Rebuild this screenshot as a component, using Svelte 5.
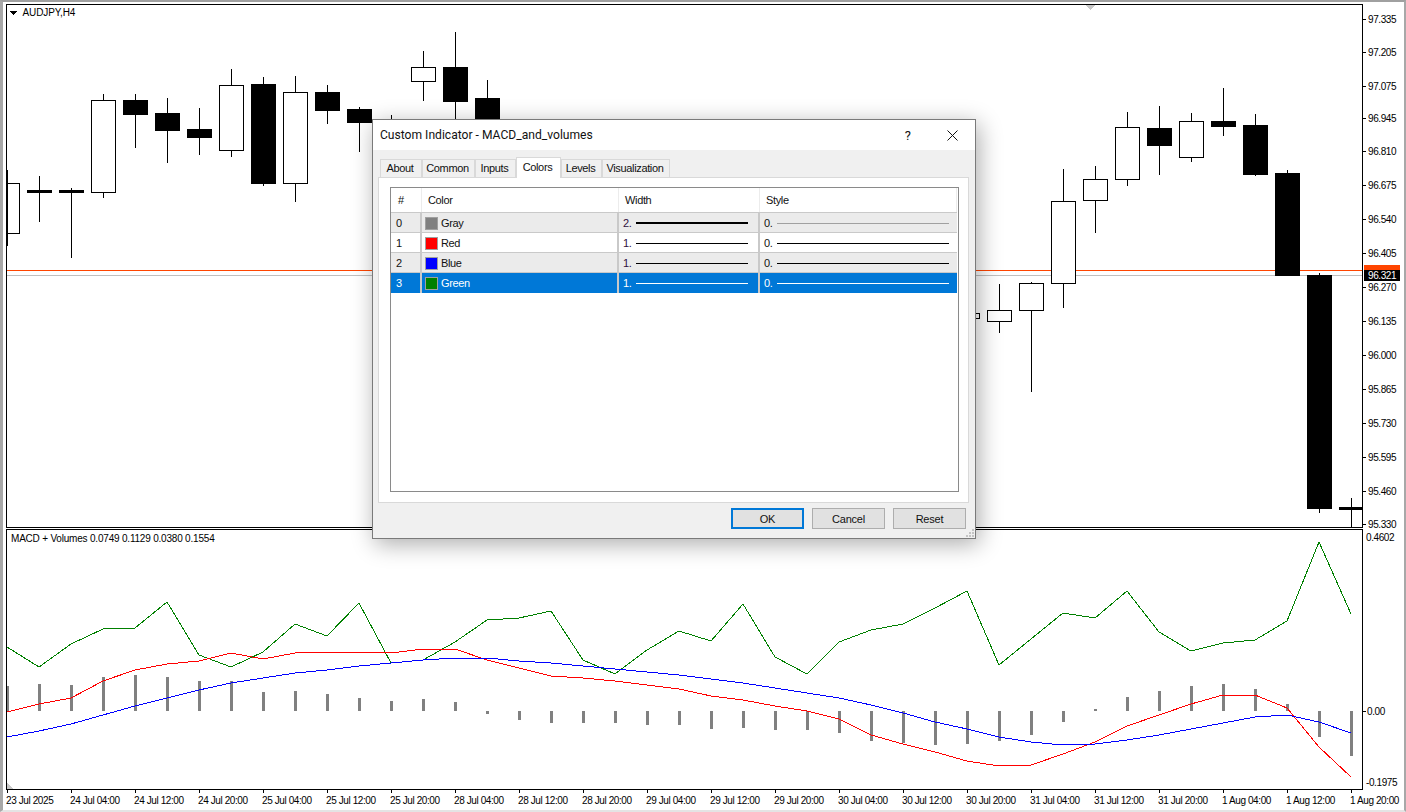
<script lang="ts">
  // chart data, in page pixels: one candle every 32px starting at x=7
  type Candle = { x: number; hi: number; lo: number; top: number; bot: number; down: boolean };
  const c = (x: number, hi: number, lo: number, top: number, bot: number, down = false): Candle => ({ x, hi, lo, top, bot, down });

  const candles: Candle[] = [
    c(7, 170, 246, 183, 233),
    c(39, 176, 222, 190, 192, true),
    c(71, 188, 258, 190, 192, true),
    c(103, 94, 198, 100, 192),
    c(135, 94, 148, 100, 114, true),
    c(167, 98, 163, 113, 130, true),
    c(199, 108, 155, 129, 137, true),
    c(231, 69, 157, 85, 150),
    c(263, 77, 186, 84, 183, true),
    c(295, 76, 202, 92, 183),
    c(327, 85, 124, 92, 110, true),
    c(359, 107, 152, 109, 122, true),
    c(391, 115, 150, 125, 140),
    c(423, 51, 101, 67, 81),
    c(455, 32, 140, 67, 101, true),
    c(487, 80, 140, 98, 130, true),
    c(967, 300, 330, 313, 318),
    c(999, 284, 333, 310, 321),
    c(1031, 282, 392, 283, 310),
    c(1063, 169, 308, 201, 283),
    c(1095, 166, 233, 179, 200),
    c(1127, 112, 186, 127, 179),
    c(1159, 106, 175, 128, 145, true),
    c(1191, 113, 162, 121, 157),
    c(1223, 88, 136, 121, 126, true),
    c(1255, 114, 176, 125, 174, true),
    c(1287, 170, 275, 173, 275, true),
    c(1319, 273, 513, 275, 508, true),
    c(1351, 498, 527, 507, 509, true)
  ];

  const prices: [string, number][] = [
    ['97.335', 19], ['97.205', 52], ['97.075', 86], ['96.945', 118], ['96.810', 151], ['96.675', 185],
    ['96.540', 219], ['96.405', 253], ['96.270', 287], ['96.135', 321], ['96.000', 355], ['95.865', 389],
    ['95.730', 423], ['95.595', 457], ['95.460', 491], ['95.330', 524]
  ];

  const times = ['23 Jul 2025', '24 Jul 04:00', '24 Jul 12:00', '24 Jul 20:00', '25 Jul 04:00', '25 Jul 12:00', '25 Jul 20:00',
    '28 Jul 04:00', '28 Jul 12:00', '28 Jul 20:00', '29 Jul 04:00', '29 Jul 12:00', '29 Jul 20:00', '30 Jul 04:00',
    '30 Jul 12:00', '30 Jul 20:00', '31 Jul 04:00', '31 Jul 12:00', '31 Jul 20:00', '1 Aug 04:00', '1 Aug 12:00', '1 Aug 20:00'];

  const zero = 711;
  const bars = [686, 684, 685, 677, 675, 677, 681, 681, 692, 691, 694, 698, 701, 699, 702, 714, 720, 723, 723, 723, 725, 725,
    729, 728, 730, 730, 733, 741, 743, 745, 744, 741, 735, 722, 709, 697, 691, 686, 684, 689, 704, 737, 756];
  const green = [647, 667, 644, 629, 628, 602, 655, 667, 652, 624, 636, 603, 663, 660, 642, 620, 618, 611, 660, 674, 650, 631,
    641, 604, 657, 674, 642, 630, 624, 608, 591, 665, 639, 613, 618, 591, 632, 651, 643, 640, 621, 542, 614];
  const red = [712, 704, 698, 681, 670, 664, 661, 653, 659, 653, 652, 652, 653, 649, 649, 660, 668, 676, 678, 681, 685, 689,
    696, 700, 706, 711, 719, 735, 744, 752, 761, 766, 765, 754, 742, 726, 715, 704, 695, 695, 708, 747, 777];
  const blue = [737, 731, 724, 715, 706, 698, 690, 683, 678, 673, 670, 666, 663, 660, 658, 658, 661, 663, 666, 669, 672, 675,
    679, 683, 688, 693, 698, 705, 713, 722, 729, 737, 742, 745, 744, 740, 735, 729, 723, 717, 715, 722, 733];

  const pts = (ys: number[]) => ys.map((y, i) => `${7 + i * 32},${y}`).join(' ');

  const tabs = [
    { name: 'About', w: 42 }, { name: 'Common', w: 53 }, { name: 'Inputs', w: 41 },
    { name: 'Colors', w: 45, active: true }, { name: 'Levels', w: 41 }, { name: 'Visualization', w: 68 }
  ];
  const rows = [
    { n: 0, name: 'Gray', color: '#808080', width: 2 },
    { n: 1, name: 'Red', color: '#ff0000', width: 1 },
    { n: 2, name: 'Blue', color: '#0000ff', width: 1 },
    { n: 3, name: 'Green', color: '#008000', width: 1, selected: true }
  ];
</script>

<div class="terminal">
  <div class="pane">
    <svg class="chart" width="1400" height="524" viewBox="0 4 1400 524">
      <g shape-rendering="crispEdges">
        <line class="ask" x1="6" x2="1362" y1="270.5" y2="270.5" />
        <line class="bid" x1="6" x2="1362" y1="275.5" y2="275.5" />
        {#each candles as k}
          {@const x0 = Math.max(k.x - 12, 7)}
          {@const x1 = Math.min(k.x + 12, 1361)}
          <line class="wick" x1={k.x + 0.5} x2={k.x + 0.5} y1={k.hi} y2={k.lo} />
          <rect class={k.down ? 'body down' : 'body up'}
            x={x0 + 0.5} y={k.top + 0.5} width={x1 - x0} height={k.bot - k.top} />
        {/each}
        <polygon class="mark" points="1085,5 1095,5 1090,10" />
        <polygon class="menu" points="10,11 17,11 13.5,15" />
        <rect class="frame" x="6.5" y="4.5" width="1356" height="523" />

        {#each prices as [p, y]}
          <line class="tick" x1="1363" x2="1366" y1={y + 0.5} y2={y + 0.5} />
        {/each}
        <rect x="1364" y="265" width="36" height="11" fill="#ff4500" />
        <rect x="1364" y="270" width="36" height="11" fill="#000" />
      </g>
      <text class="lbl sym" x="22.5" y="16">AUDJPY,H4</text>
      {#each prices as [p, y]}
        <text class="lbl" x="1368" y={y + 4}>{p}</text>
      {/each}
      <text class="lbl inv" x="1368" y="279">96.321</text>
    </svg>
  </div>

  <div class="pane sub">
    <svg class="chart" width="1400" height="280" viewBox="0 529 1400 280">
      <g shape-rendering="crispEdges">
        {#each bars as top, i}
          <rect x={6 + i * 32} y={Math.min(top, zero)} width="3" height={Math.abs(zero - top)} fill="#808080" />
        {/each}
        <polyline class="ln" stroke="#008000" points={pts(green)} />
        <polyline class="ln" stroke="#ff0000" points={pts(red)} />
        <polyline class="ln" stroke="#0000ff" points={pts(blue)} />
        <polygon class="mark" points="7,783 7,789 13,789" />
        <rect class="frame" x="6.5" y="529.5" width="1356" height="260" />
        <line class="tick" x1="1363" x2="1366" y1="711.5" y2="711.5" />
        {#each times as t, i}
          <line class="tick" x1={7.5 + i * 64} x2={7.5 + i * 64} y1="790" y2="793" />
        {/each}
      </g>
      <text class="lbl legend" x="11" y="542">MACD + Volumes 0.0749 0.1129 0.0380 0.1554</text>
      <text class="lbl" x="1366" y="541">0.4602</text>
      <text class="lbl" x="1367" y="715">0.00</text>
      <text class="lbl" x="1366" y="786">-0.1975</text>
      {#each times as t, i}
        <text class="lbl" x={6 + i * 64} y="804">{t}</text>
      {/each}
    </svg>
  </div>

  <div class="dialog">
    <div class="titlebar">
      <span class="title">Custom Indicator - MACD_and_volumes</span>
      <span class="help">?</span>
      <svg class="close" width="11" height="11" viewBox="0 0 11 11">
        <path d="M0.5 0.5 L10.5 10.5 M10.5 0.5 L0.5 10.5" stroke="#111" fill="none" />
      </svg>
    </div>
    <div class="content">
      <div class="tabs">
        {#each tabs as t}
          <div class="tab" class:active={t.active} style="width: {t.w}px">{t.name}</div>
        {/each}
      </div>
      <div class="panel">
        <div class="list">
          <div class="row head">
            <div class="hash">#</div><div>Color</div><div>Width</div><div>Style</div>
          </div>
          {#each rows as r}
            <div class="row item" class:odd={r.n % 2 === 0} class:selected={r.selected}>
              <div class="num">{r.n}</div>
              <div class="name"><i class="swatch" style="background: {r.color}"></i>{r.name}</div>
              <div class="val"><span class="v w">{r.width}.</span><b class="line" style="height: {r.width === 2 ? 2 : 1}px"></b></div>
              <div class="val"><span class="v">0.</span><b class="line" class:faint={r.n === 0}></b></div>
            </div>
          {/each}
        </div>
      </div>
      <div class="buttons">
        <button class="default">OK</button>
        <button>Cancel</button>
        <button>Reset</button>
      </div>
      <svg class="grip" width="10" height="9" viewBox="0 0 10 9" shape-rendering="crispEdges">
        <path d="M7 0h2v2H7zM4 3h2v2H4zM7 3h2v2H7zM1 6h2v2H1zM4 6h2v2H4zM7 6h2v2H7z" fill="#c4c4c4" />
      </svg>
    </div>
  </div>
</div>

<style>
  :global(body) { margin: 0; background: #fff; }
  .terminal {
    position: relative; width: 1406px; height: 812px; overflow: hidden; box-sizing: border-box;
    padding-top: 2px; background: #fff;
    border-top: 2px solid #a0a0a0; border-left: 3px solid #a8a8a8;
    border-right: 2px solid #a8a8a8; border-bottom: 2px solid #e4e4e4;
  }
  .pane { margin-left: -3px; height: 525px; }
  .pane.sub { height: 280px; }
  .chart { display: block; overflow: visible; }

  .ask { stroke: #ff4500; }
  .bid { stroke: #c0c0c0; }
  .wick { stroke: #000; }
  .body { stroke: #000; }
  .up { fill: #fff; }
  .down { fill: #000; }
  .frame { fill: none; stroke: #000; }
  .tick { stroke: #000; }
  .mark { fill: #c8c8c8; }
  .menu { fill: #000; }
  .ln { fill: none; stroke-width: 1; }
  .lbl { font: 10px "Liberation Sans", Arial, sans-serif; letter-spacing: -.4px; fill: #000; }
  .legend { letter-spacing: -.2px; }
  .sym { letter-spacing: -.1px; }
  .inv { fill: #fff; }

  .dialog {
    position: absolute; left: 369px; top: 117px; width: 602px; height: 418px;
    border: 1px solid #7a7a7a; background: #f0f0f0;
    box-shadow: 3px 5px 22px rgba(0, 0, 0, .33);
    display: flex; flex-direction: column;
    font: 11px "Liberation Sans", Arial, sans-serif; letter-spacing: -.35px; color: #111;
  }
  .titlebar {
    height: 30px; background: #fff; display: flex; align-items: center; padding-left: 7px; flex: none;
    letter-spacing: 0;
  }
  .title { font: 12.1px Roboto, "Noto Sans", sans-serif; flex: 1; }
  .help { font: 13px Roboto, sans-serif; margin-right: 36px; }
  .close { margin-right: 17px; }
  .content { flex: 1; padding: 7px 6px 0 5px; position: relative; display: flex; flex-direction: column; }
  .tabs { display: flex; padding-left: 2px; height: 20px; position: relative; z-index: 1; align-items: flex-end; }
  .tab {
    height: 18px; box-sizing: border-box; border: 1px solid #d9d9d9; border-bottom: 0; padding-right: 2px;
    background: #f0f0f0; text-align: center; line-height: 17px;
  }
  .tab.active { height: 21px; background: #fff; line-height: 19px; margin-bottom: -1px; }
  .panel {
    height: 326px; box-sizing: border-box; border: 1px solid #d9d9d9; background: #fff;
    padding: 9px 9px 10px 11px;
  }
  .list { height: 100%; box-sizing: border-box; border: 1px solid #8a8a8a; padding-right: 1px; }
  .row { display: grid; grid-template-columns: 31px 197px 141px 1fr; }
  .head { height: 25px; box-sizing: border-box; line-height: 24px; border-bottom: 1px solid #c9c9c9; }
  .head div { padding-left: 6px; border-right: 1px solid #ececec; }
  .head .hash { padding-left: 7px; }
  .item { height: 20px; box-shadow: inset 0 -1px #c9c9c9; }
  .item > div { border-right: 2px solid #c9c9c9; padding-left: 4px; display: flex; align-items: center; }
  .item > div:last-child { border-right: 0; }
  .item > .num { padding-left: 5px; }
  .item > .name { padding-left: 3px; }
  .odd { background: #ebebeb; }
  .item:not(.odd) { background: #fff; }
  .item.selected { background: #0078d7; color: #fff; box-shadow: none; }
  .swatch { width: 11px; height: 11px; border: 1px solid #a0a0a0; margin-right: 3px; display: block; }
  .v { width: 13px; flex: none; }
  .w { color: #301040; }
  .selected .w { color: #fff; }
  .line { flex: 1; height: 1px; margin-right: 8px; background: #000; display: block; }
  .val:nth-child(3) .line { margin-right: 10px; }
  .line.faint { background: #a0a0a0; }
  .selected .line { background: #fff; }
  .buttons { display: flex; justify-content: flex-end; gap: 8px; padding: 5px 3px 0 0; }
  button {
    width: 73px; height: 21px; box-sizing: border-box; padding: 0; background: #e1e1e1;
    border: 1px solid #adadad; font: 11px "Liberation Sans", Arial, sans-serif; letter-spacing: -.2px;
    color: #111; border-radius: 0;
  }
  .default { border: 2px solid #0078d7; }
  .grip { position: absolute; right: 0; bottom: 0; }
</style>
